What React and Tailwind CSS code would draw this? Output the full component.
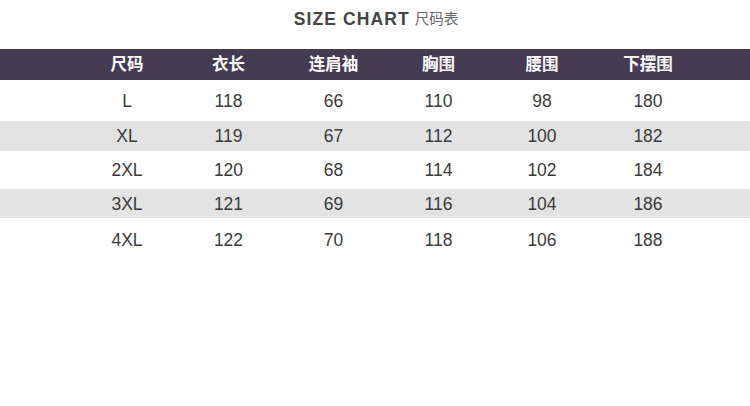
const cols = [
  { label: "尺码", w: "w-[100px]" },
  { label: "衣长", w: "w-[103px]" },
  { label: "连肩袖", w: "w-[107px]" },
  { label: "胸围", w: "w-[103px]" },
  { label: "腰围", w: "w-[104px]" },
  { label: "下摆围", w: "w-[108px]" },
];

const rows = [
  { h: "h-[41px]", bg: "bg-white", cells: ["L", "118", "66", "110", "98", "180"] },
  { h: "h-[30px]", bg: "bg-[#e3e3e3]", cells: ["XL", "119", "67", "112", "100", "182"] },
  { h: "h-[38px]", bg: "bg-white", cells: ["2XL", "120", "68", "114", "102", "184"] },
  { h: "h-[29px]", bg: "bg-[#e3e3e3]", cells: ["3XL", "121", "69", "116", "104", "186"] },
  { h: "h-[44px]", bg: "bg-white", cells: ["4XL", "122", "70", "118", "106", "188"] },
];

function App() {
  return (
    <div className="w-[750px] h-[406px] bg-white overflow-hidden font-['Liberation_Sans','Noto_Sans_CJK_SC',sans-serif]">
      <div className="h-[49px] flex items-start justify-center pt-[9px] pl-[2px]">
        <h1 className="text-[17.5px] font-bold text-[#444444] tracking-[1.1px] leading-[20px]">SIZE CHART</h1>
        <span className="ml-[5px] text-[14.5px] text-[#666666] leading-[20px]">尺码表</span>
      </div>

      <div className="h-[31px] bg-[#453c53] flex items-center pl-[77px]">
        {cols.map((c) => (
          <div key={c.label} className={`${c.w} text-center text-white font-bold text-[16.5px] leading-none`}>
            {c.label}
          </div>
        ))}
      </div>

      {rows.map((r, i) => (
        <div key={i} className={`${r.h} ${r.bg} flex items-center pl-[77px] pt-[2px]`}>
          {r.cells.map((v, j) => (
            <div key={j} className={`${cols[j].w} text-center text-[#3a3a3a] text-[17.5px] leading-none`}>
              {v}
            </div>
          ))}
        </div>
      ))}
    </div>
  );
}

export default App;
